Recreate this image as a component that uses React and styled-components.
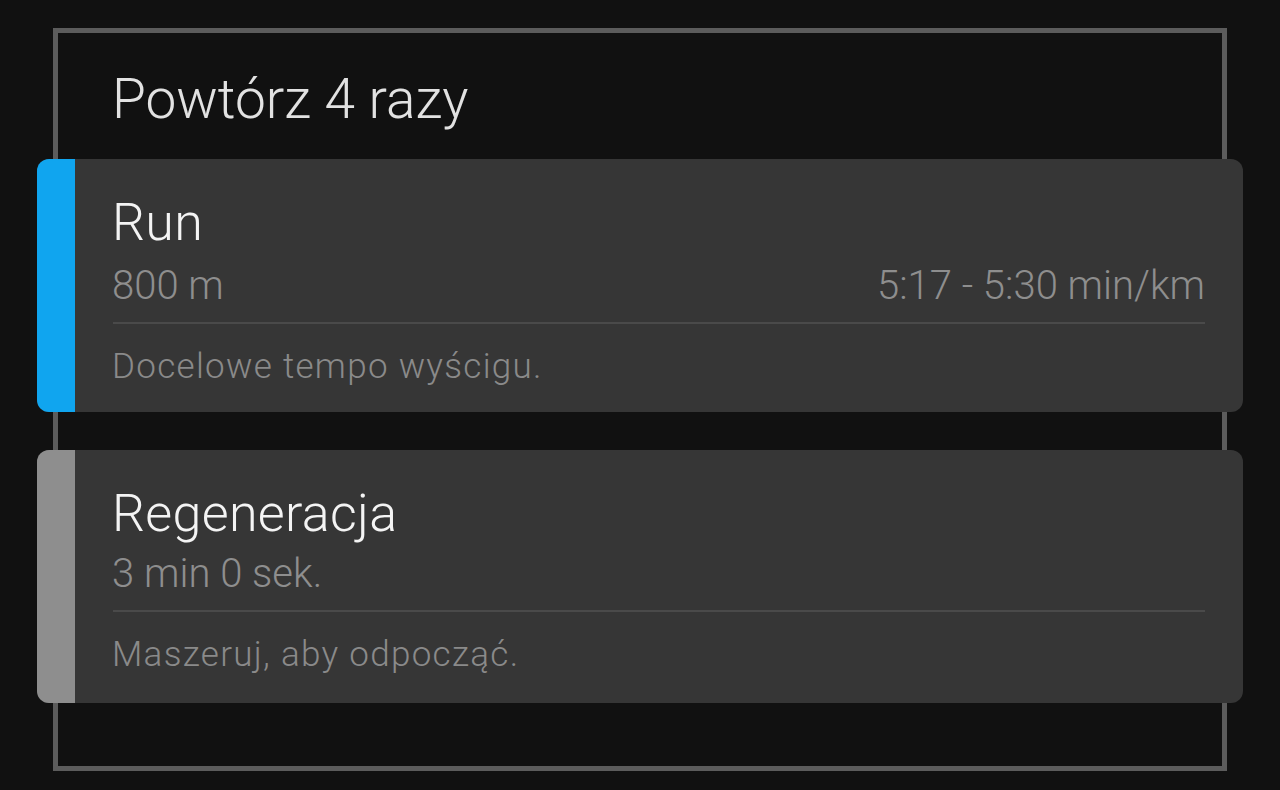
import React from 'react';
import styled, { createGlobalStyle } from 'styled-components';

const GlobalStyle = createGlobalStyle`
  html, body {
    margin: 0;
    background: #111111;
  }
  body {
    font-family: Roboto, "Noto Sans", sans-serif;
  }
`;

const Page = styled.div`
  padding: 28px 53px 19px;
`;

const RepeatBox = styled.section`
  box-sizing: border-box;
  height: 743px;
  border: 5px solid #5c5c5c;
  display: flex;
  flex-direction: column;
`;

const Title = styled.h2`
  margin: 0;
  padding: 35px 0 29px 54px;
  font-size: 55px;
  line-height: 62px;
  font-weight: 300;
  color: #e2e2e2;
`;

const StepList = styled.div`
  display: flex;
  flex-direction: column;
  gap: 38px;
  margin: 0 -21px;
`;

const Card = styled.div`
  display: flex;
  height: 253px;
  background: #363636;
  border-radius: 12px;
  overflow: hidden;
`;

const Stripe = styled.div`
  width: 38px;
  flex: none;
  background: ${({ $color }) => $color};
`;

const Body = styled.div`
  flex: 1;
  padding: 34px 38px 25px 37px;
  display: flex;
  flex-direction: column;
`;

const Name = styled.div`
  font-size: 52px;
  line-height: 60px;
  font-weight: 300;
  letter-spacing: 0.3px;
  color: #f4f4f4;
`;

const SubRow = styled.div`
  margin-top: ${({ $tight }) => ($tight ? '8px' : '11px')};
  display: flex;
  justify-content: space-between;
  font-size: 40px;
  line-height: 44px;
  font-weight: 300;
  color: #8e8e8e;
`;

const Divider = styled.div`
  margin-top: 14px;
  margin-left: 1px;
  height: 2px;
  background: #4a4a4a;
`;

const Note = styled.div`
  margin-top: 23px;
  font-size: 35px;
  line-height: 40px;
  font-weight: 300;
  letter-spacing: 1.3px;
  color: #8a8a8a;
`;

const steps = [
  { name: 'Run', color: '#10a5ef', left: '800 m', right: '5:17 - 5:30 min/km', note: 'Docelowe tempo wyścigu.' },
  { name: 'Regeneracja', color: '#8e8e8e', left: '3 min 0 sek.', note: 'Maszeruj, aby odpocząć.', tight: true },
];

export default function App() {
  return (
    <>
      <GlobalStyle />
      <Page>
        <RepeatBox>
          <Title>Powtórz 4 razy</Title>
          <StepList>
            {steps.map((s) => (
              <Card key={s.name}>
                <Stripe $color={s.color} />
                <Body>
                  <Name>{s.name}</Name>
                  <SubRow $tight={s.tight}>
                    <span>{s.left}</span>
                    {s.right && <span>{s.right}</span>}
                  </SubRow>
                  <Divider />
                  <Note>{s.note}</Note>
                </Body>
              </Card>
            ))}
          </StepList>
        </RepeatBox>
      </Page>
    </>
  );
}
